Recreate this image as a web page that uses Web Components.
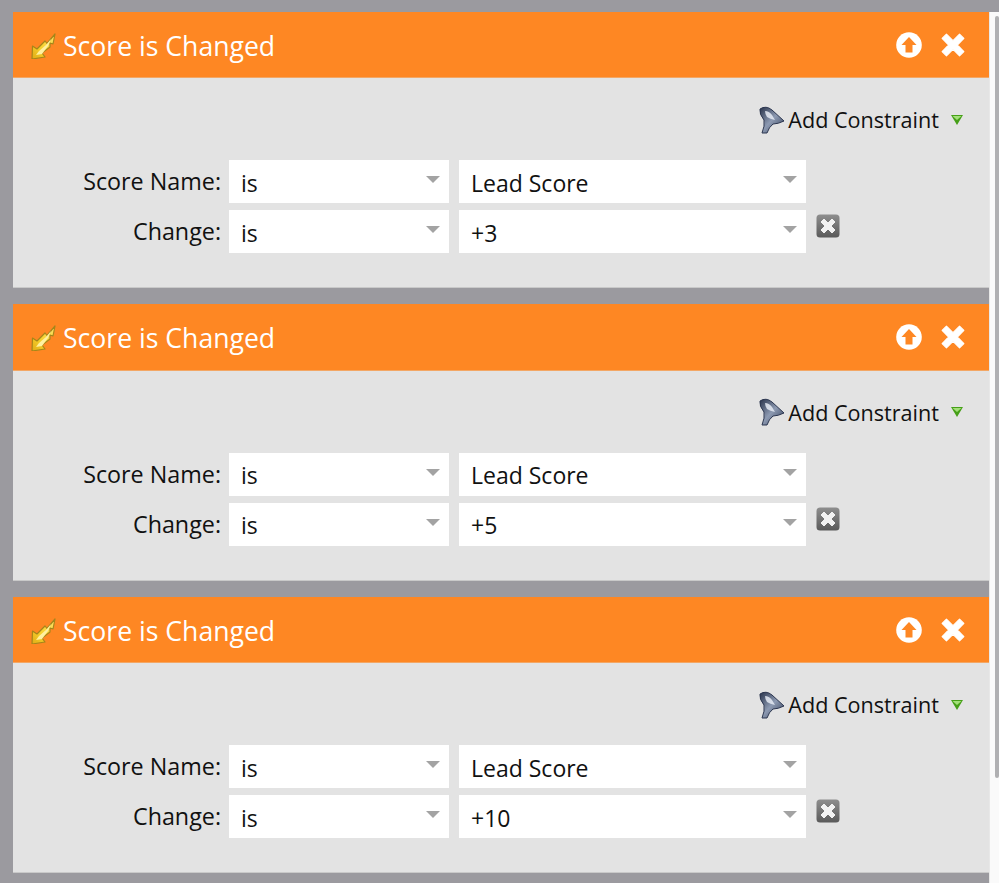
<!DOCTYPE html>
<html>
<head>
<meta charset="utf-8">
<title>Score is Changed</title>
<style>
    html, body { margin: 0; height: 100%; background: #9b9a9f; }
    body { font-family: "Open Sans", "Liberation Sans", sans-serif; overflow: hidden; }
</style>
</head>
<body>
<trigger-list>
    <trigger-card value="+3"></trigger-card>
    <trigger-card value="+5"></trigger-card>
    <trigger-card value="+10"></trigger-card>
</trigger-list>

<script>
class TriggerList extends HTMLElement {
    constructor() {
        super();
        this.attachShadow({mode: 'open'});
    }

    connectedCallback() {
        this.shadowRoot.innerHTML = `
        <style>
            :host { display: flex; height: 883px; box-sizing: border-box; }
            .list {
                display: flex;
                flex-direction: column;
                gap: 16.2px;
                width: 976px;
                margin: 12px 0 0 13px;
            }
            .track {
                flex: 1;
                margin-top: 12px;
                background: #fafafa;
                border-left: 1px solid #e8e8e8;
            }
            .thumb {
                width: 4px;
                height: 762px;
                margin: 4px 0 0 5px;
                background: #b0b0b2;
                border-radius: 3px;
            }
        </style>
        <div class="list"><slot></slot></div>
        <div class="track"><div class="thumb"></div></div>
        `;
    }
}

class TriggerCard extends HTMLElement {
    constructor() {
        super();
        this.attachShadow({mode: 'open'});
    }

    connectedCallback() {
        const value = this.getAttribute('value');
        const id = value.replace('+', 'v');
        this.shadowRoot.innerHTML = `
        <style>
            :host { display: block; height: 276.3px; background: #e3e3e3; border-bottom: 1px solid #c9c9c9; box-sizing: border-box; }
            header {
                display: flex;
                align-items: center;
                height: 66.3px;
                padding: 0 24px 0 17px;
                box-sizing: border-box;
                background: #fe8723;
                border-bottom: 1px solid #f3a765;
                color: #fff;
                font-size: 26.6px;
                font-weight: 500;
            }
            header .bolt { margin-right: 7px; margin-top: 2px; }
            header .title { flex: 1; margin-top: 2px; }
            header .tools { display: flex; align-items: center; gap: 19px; }
            .constraint {
                display: flex;
                justify-content: flex-end;
                align-items: center;
                margin: 27px 25px 0 0;
                height: 29px;
                color: #111;
                font-size: 21.6px;
            }
            .constraint .funnel { margin-right: 2px; }
            .constraint .caret { margin-left: 11px; }
            .rows {
                display: grid;
                grid-template-columns: 206px 220px 347px 40px;
                column-gap: 10px;
                row-gap: 7px;
                align-items: center;
                margin-top: 26px;
            }
            .rows label { text-align: right; font-size: 23.3px; color: #111; margin: -1px -2px 0 0; }
            .del { align-self: start; margin-top: 4px; display: block; }
        </style>
        <header>
            <svg class="bolt" width="26" height="26" viewBox="0 0 26 26">
                <defs>
                    <linearGradient id="b${id}" x1="1" y1="0" x2="0" y2="1">
                        <stop offset="0" stop-color="#fde36a"/>
                        <stop offset="0.6" stop-color="#f6d02c"/>
                        <stop offset="1" stop-color="#e0ac16"/>
                    </linearGradient>
                </defs>
                <path d="M25 1 L23 11 L20 10 L20 14 L12 20 L15 24 L2 26 L2.5 13 L7 16 L15 8 L17 10.5 Z" fill="url(#b${id})" stroke="#a5861a" stroke-width="1.2" stroke-linejoin="round"/>
                <path d="M21 6 L16 12 L9 18 L6 22 L12 21 L18 13 Z" fill="#fff1a0"/>
            </svg>
            <span class="title">Score is Changed</span>
            <span class="tools">
                <svg width="26" height="26" viewBox="0 0 26 26">
                    <circle cx="13" cy="13" r="12.8" fill="#fff"/>
                    <path d="M13 5 L20.5 13 L16.5 13 L16.5 20.5 L9.5 20.5 L9.5 13 L5.5 13 Z" fill="#fe8723"/>
                </svg>
                <svg width="24" height="24" viewBox="2 2 22 22">
                    <path d="M3 7 L7 3 L13 9 L19 3 L23 7 L17 13 L23 19 L19 23 L13 17 L7 23 L3 19 L9 13 Z" fill="#fff" stroke="#fff" stroke-width="1" stroke-linejoin="round"/>
                </svg>
            </span>
        </header>
        <div class="constraint">
            <svg class="funnel" width="27" height="28" viewBox="0 0 27 28">
                <defs>
                    <linearGradient id="f${id}" x1="0" y1="0" x2="1" y2="1">
                        <stop offset="0" stop-color="#28324a"/>
                        <stop offset="0.5" stop-color="#8d9ab2"/>
                        <stop offset="1" stop-color="#2f3b55"/>
                    </linearGradient>
                </defs>
                <path d="M1 3 Q7 -1 13 4 L25 15 Q19 18 14 18 Q10 21 8 27 L3 27 Q6 20 5 14 Q0 8 1 3 Z" fill="url(#f${id})" stroke="#2c3650" stroke-width="1"/>
                <path d="M6 5 Q10 5 13 9 L16 14 Q11 13 8 11 Q6 8 6 5 Z" fill="#e6ebf4" opacity="0.85"/>
            </svg>
            <span>Add Constraint</span>
            <svg class="caret" width="14" height="12" viewBox="0 0 14 12">
                <path d="M1 1 L13 1 L7 11 Z" fill="#46a018"/>
                <path d="M2.5 2 L11.5 2 L7 6 Z" fill="#a4e07a"/>
            </svg>
        </div>
        <div class="rows">
            <label>Score Name:</label>
            <mkt-select>is</mkt-select>
            <mkt-select>Lead Score</mkt-select>
            <span></span>
            <label>Change:</label>
            <mkt-select>is</mkt-select>
            <mkt-select>${value}</mkt-select>
            <svg class="del" width="24" height="24" viewBox="0 0 24 24">
                <defs>
                    <linearGradient id="d${id}" x1="0" y1="0" x2="0" y2="1">
                        <stop offset="0" stop-color="#8e8e8e"/>
                        <stop offset="1" stop-color="#5a5a5a"/>
                    </linearGradient>
                </defs>
                <rect x="0.5" y="0.5" width="23" height="23" rx="3.5" fill="url(#d${id})"/>
                <path d="M5 8 L8 5 L12 9 L16 5 L19 8 L15 12 L19 16 L16 19 L12 15 L8 19 L5 16 L9 12 Z" fill="#f2f2f2" stroke="#f2f2f2" stroke-linejoin="round"/>
            </svg>
        </div>
        `;
    }
}

class MktSelect extends HTMLElement {
    constructor() {
        super();
        this.attachShadow({mode: 'open'});
    }

    connectedCallback() {
        this.shadowRoot.innerHTML = `
        <style>
            :host {
                display: flex;
                align-items: center;
                height: 43px;
                padding: 2px 9px 0 12px;
                box-sizing: border-box;
                background: #fff;
                color: #111;
                font-size: 23px;
            }
            .text { flex: 1; }
            .arrow {
                width: 0;
                height: 0;
                margin-top: -6px;
                border-left: 7px solid transparent;
                border-right: 7px solid transparent;
                border-top: 7px solid #a3a3a3;
            }
        </style>
        <span class="text"><slot></slot></span>
        <span class="arrow"></span>
        `;
    }
}

customElements.define('trigger-list', TriggerList);
customElements.define('trigger-card', TriggerCard);
customElements.define('mkt-select', MktSelect);
</script>
</body>
</html>
